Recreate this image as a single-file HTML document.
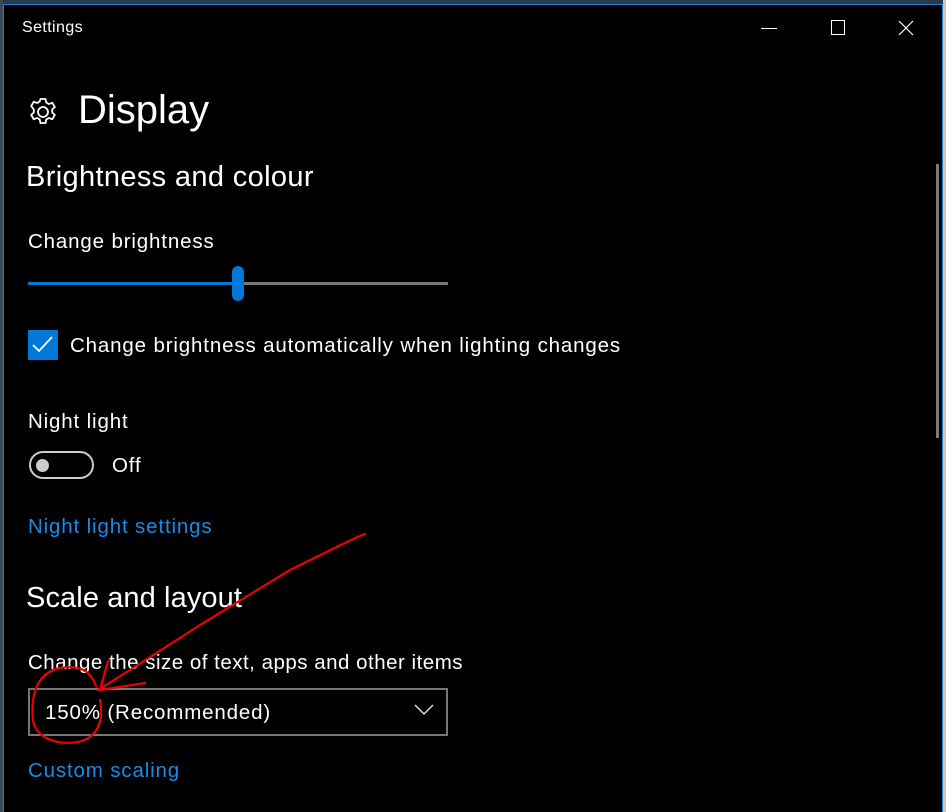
<!DOCTYPE html>
<html><head><meta charset="utf-8"><style>
*{margin:0;padding:0;box-sizing:border-box}
body{width:946px;height:812px;overflow:hidden;background:#000;position:relative;font-family:"Liberation Sans",sans-serif;color:#fff}
.a{position:absolute;white-space:nowrap}
.t{font-size:20.5px;letter-spacing:0.85px}
</style></head><body>
<div class="a" style="left:0;top:0;width:946px;height:5px;background:#2a3a4a"></div>
<div class="a" style="left:0;top:0;width:3px;height:812px;background:#3a4a5a"></div>
<div class="a" style="left:3px;top:4px;width:1px;height:808px;background:#1e7fd6"></div>
<div class="a" style="left:943px;top:0;width:3px;height:812px;background:#d4cc9e"></div>
<div class="a" style="left:942px;top:4px;width:1px;height:808px;background:#1e7fd6"></div>
<div class="a" style="left:3px;top:4px;width:940px;height:1px;background:#1e7fd6"></div>
<div class="a" style="left:936px;top:164px;width:3px;height:274px;background:#7a7a7a"></div>

<div class="a" style="left:22px;top:19px;font-size:16px;letter-spacing:0.4px">Settings</div>
<div class="a" style="left:761px;top:28px;width:16px;height:1px;background:#fff"></div>
<div class="a" style="left:831px;top:20px;width:14px;height:15px;border:1px solid #fff"></div>
<svg class="a" style="left:898px;top:20px" width="16" height="16"><path d="M1 1L15 15M15 1L1 15" stroke="#fff" stroke-width="1.2"/></svg>

<svg class="a" style="left:27px;top:96px" width="32" height="32" viewBox="0 0 32 32"><g fill="none" stroke="#fff" stroke-width="1.8"><circle cx="16" cy="16" r="5"/><path d="M13.5 3h5l.8 3.5 2.6 1.5 3.4-1.2 2.5 4.3-2.6 2.4v3l2.6 2.4-2.5 4.3-3.4-1.2-2.6 1.5-.8 3.5h-5l-.8-3.5-2.6-1.5-3.4 1.2-2.5-4.3 2.6-2.4v-3L4.2 10.1l2.5-4.3 3.4 1.2 2.6-1.5z"/></g></svg>
<div class="a" style="left:78px;top:88px;font-size:40px">Display</div>
<div class="a" style="left:26px;top:161px;font-size:29px;letter-spacing:0.35px">Brightness and colour</div>
<div class="a t" style="left:28px;top:230px">Change brightness</div>
<div class="a" style="left:28px;top:282px;width:210px;height:3px;background:#0078d7"></div>
<div class="a" style="left:238px;top:282px;width:210px;height:3px;background:#7a7a7a"></div>
<div class="a" style="left:232px;top:266px;width:12px;height:35px;border-radius:6px;background:#0078d7"></div>
<div class="a" style="left:28px;top:330px;width:30px;height:30px;background:#0078d7"></div>
<svg class="a" style="left:28px;top:330px" width="30" height="30"><path d="M5 15l6 6L24 7" fill="none" stroke="#fff" stroke-width="1.7"/></svg>
<div class="a t" style="left:70px;top:334px">Change brightness automatically when lighting changes</div>
<div class="a t" style="left:28px;top:410px">Night light</div>
<div class="a" style="left:29px;top:451px;width:65px;height:28px;border:2px solid #ccc;border-radius:14px"></div>
<div class="a" style="left:36px;top:459px;width:13px;height:13px;border-radius:50%;background:#ccc"></div>
<div class="a t" style="left:112px;top:454px">Off</div>
<div class="a t" style="left:28px;top:515px;color:#1a8ae6">Night light settings</div>
<div class="a" style="left:26px;top:582px;font-size:29px;letter-spacing:0.1px">Scale and layout</div>
<div class="a t" style="left:28px;top:651px;letter-spacing:0.5px">Change the size of text, apps and other items</div>
<div class="a" style="left:28px;top:688px;width:420px;height:48px;border:2px solid #777"></div>
<div class="a t" style="left:45px;top:701px">150% (Recommended)</div>
<svg class="a" style="left:414px;top:704px" width="20" height="12"><path d="M1 1l9 9 9-9" fill="none" stroke="#ddd" stroke-width="1.5"/></svg>
<div class="a t" style="left:28px;top:759px;color:#1a8ae6">Custom scaling</div>

<svg class="a" style="left:0;top:0" width="946" height="812"><g fill="none" stroke="#e00" stroke-width="2.2" stroke-linecap="round">
<path d="M365 534L355 538 290 570 200 625 130 670 98 690"/>
<path d="M108 661L100 690 145 683"/>
<path d="M96 686C90 670 80 665 60 668 40 672 30 690 33 720 36 740 60 745 78 742 98 738 104 720 100 700"/>
</g></svg>
</body></html>
